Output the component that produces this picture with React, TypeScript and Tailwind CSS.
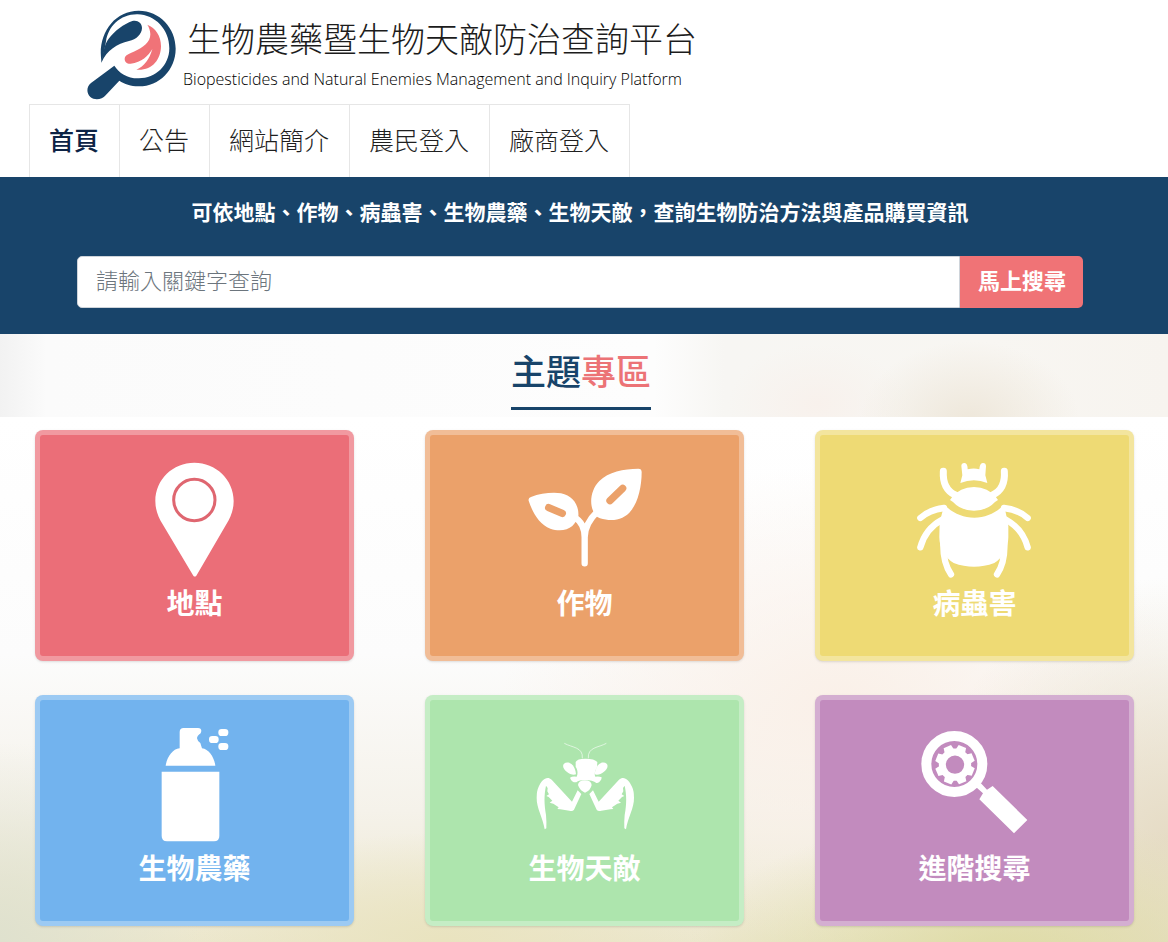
import { useState, type ReactNode } from "react";

type Topic = {
  label: string;
  href: string;
  color: string;
  icon: ReactNode;
};

const NAV_ITEMS = [
  { label: "首頁", href: "#home" },
  { label: "公告", href: "#news" },
  { label: "網站簡介", href: "#about" },
  { label: "農民登入", href: "#farmer-login" },
  { label: "廠商登入", href: "#vendor-login" },
];

const TOPICS: Topic[] = [
  { label: "地點", href: "#location", color: "bg-[#eb6e78]", icon: <PinIcon /> },
  { label: "作物", href: "#crop", color: "bg-[#eba16a]", icon: <SproutIcon /> },
  { label: "病蟲害", href: "#pest", color: "bg-[#eeda74]", icon: <BeetleIcon /> },
  { label: "生物農藥", href: "#biopesticide", color: "bg-[#72b3ee]", icon: <SprayIcon /> },
  { label: "生物天敵", href: "#enemy", color: "bg-[#ade5ad]", icon: <MantisIcon /> },
  { label: "進階搜尋", href: "#advanced", color: "bg-[#c28bbe]", icon: <GearSearchIcon /> },
];

export default function App() {
  return (
    <div
      lang="zh-TW"
      className="min-h-screen bg-white font-['Noto_Sans_CJK_TC','Noto_Sans',sans-serif]"
    >
      <Header />
      <main>
        <SearchBanner />
        <TopicHeading />
        <TopicGrid />
      </main>
    </div>
  );
}

function Header() {
  return (
    <header className="pt-[10px]">
      <a href="#home" className="inline-flex pl-[87px] align-top text-[#1c1c1c]">
        <Logo />
        <span className="block pt-1 pl-[6px]">
          <span className="block pl-1 text-[34px] leading-[48px] font-light">
            生物農藥暨生物天敵防治查詢平台
          </span>
          <span className="mt-[6px] block font-['Open_Sans','Noto_Sans',sans-serif] text-[16px] leading-[22px] font-light text-black">
            Biopesticides and Natural Enemies Management and Inquiry Platform
          </span>
        </span>
      </a>
      <nav className="mt-1 ml-[29px]">
        <ul className="inline-flex border-t border-r border-[#e6e6e6] align-top">
          {NAV_ITEMS.map((item, i) => (
            <li key={item.href} className="border-l border-[#e6e6e6]">
              <a
                href={item.href}
                className={`block pr-5 pb-1 pl-[19px] text-[25px] leading-[68px] ${
                  i === 0 ? "font-medium text-[#0d2345]" : "font-light text-[#1f1f1f]"
                }`}
              >
                {item.label}
              </a>
            </li>
          ))}
        </ul>
      </nav>
    </header>
  );
}

function SearchBanner() {
  const [keyword, setKeyword] = useState("");

  return (
    <section className="bg-[#18446a] pt-[18px] pr-[85px] pb-[26px] pl-[77px]">
      <p className="text-center text-[21px] leading-8 font-bold text-white">
        可依地點、作物、病蟲害、生物農藥、生物天敵，查詢生物防治方法與產品購買資訊
      </p>
      <form className="mt-[29px] flex h-13" onSubmit={(e) => e.preventDefault()}>
        <input
          type="text"
          aria-label="關鍵字"
          value={keyword}
          onChange={(e) => setKeyword(e.target.value)}
          placeholder="請輸入關鍵字查詢"
          className="min-w-0 flex-1 rounded-l-[5px] border border-[#ced4da] bg-white px-[18px] pb-[6px] text-[22px] font-light text-[#495057] outline-none placeholder:text-[#6c757d]"
        />
        <button
          type="submit"
          className="rounded-r-[5px] bg-[#f07376] pr-[17px] pb-[6px] pl-[18px] text-[22px] font-bold text-white"
        >
          馬上搜尋
        </button>
      </form>
    </section>
  );
}

function TopicHeading() {
  return (
    <section className="bg-[#fcfcfb] bg-[radial-gradient(ellipse_110px_80px_at_83%_105%,#eee7da,transparent),radial-gradient(ellipse_90px_60px_at_70%_85%,#f8f1ec,transparent),linear-gradient(90deg,#f2f2f2,#fbfbfb_4%,#fdfdfd_56%,#f7f6f3_62%,#f8f6f2_85%,#f7f4ef)] pt-[14px] pr-[6px] pb-[7px] text-center">
      <h2 className="inline-block border-b-[3px] border-[#18446a] pb-[15px] align-top text-[35px] leading-[44px] font-medium text-[#18446a]">
        主題<span className="text-[#ec7376]">專區</span>
      </h2>
    </section>
  );
}

function TopicGrid() {
  return (
    <section className="grid grid-cols-3 gap-x-[71px] gap-y-[34px] bg-[#fcfcfc] bg-[radial-gradient(ellipse_260px_110px_at_38%_100%,#e9e3bf,transparent),radial-gradient(ellipse_320px_150px_at_86%_104%,#dedba4,transparent),radial-gradient(ellipse_200px_200px_at_0%_100%,#dfe1ce,transparent),radial-gradient(ellipse_240px_260px_at_100%_80%,#e6dcc6,transparent),radial-gradient(ellipse_340px_240px_at_72%_55%,#faf0e8,transparent),linear-gradient(180deg,#ffffff,#fcfcfc_45%,#f5f2ea_75%,#ece7cd)] pt-[13px] pr-[34px] pb-4 pl-[35px]">
      {TOPICS.map((topic) => (
        <TopicCard key={topic.href} topic={topic} />
      ))}
    </section>
  );
}

function TopicCard({ topic }: { topic: Topic }) {
  return (
    <a
      href={topic.href}
      className={`flex flex-col items-center rounded-lg border-[5px] border-white/30 pt-6 pb-[37px] text-white shadow-sm ${topic.color}`}
    >
      {topic.icon}
      <span className="mt-[6px] text-[28px] leading-[34px] font-bold">{topic.label}</span>
    </a>
  );
}

function Logo() {
  return (
    <svg viewBox="50 30 270 270" className="size-[90px]" aria-hidden="true">
      <g fill="#18446a">
        {/* lens rim and handle */}
        <path d="M94 188C79 108 128 32 205 32C268 32 316 84 316 146C316 210 266 260 204 259C182 259 162 252 147 242L106 286C95 299 73 302 60 291C47 279 49 259 62 249L132 197C146 219 172 236 206 235C256 235 297 196 297 145C297 88 254 44 202 43C150 42 113 80 107 124C104 145 98 166 94 188Z" />
        {/* upper leaf */}
        <path d="M93 188C98 160 102 132 115 116C134 92 160 72 186 63C201 59 215 68 215 84C214 104 198 118 176 123C140 132 110 150 93 188Z" />
      </g>
      <path
        fill="#f07378"
        d="M231 74C256 84 272 108 272 138C272 180 244 213 198 209C222 199 238 177 246 147C234 168 214 187 181 191C171 192 163 187 163 177C163 165 176 161 190 155C220 143 240 126 240 103C240 92 236 82 231 74Z"
      />
    </svg>
  );
}

function PinIcon() {
  return (
    <svg viewBox="344 115 360 360" className="size-[120px]" fill="currentColor" aria-hidden="true">
      <path d="M522 126C458 126 405 176 405 241C405 268 414 290 427 311L519 465Q523 470 528 465L618 311C631 290 640 268 640 241C640 176 586 126 522 126Z" />
      <circle cx="522" cy="238" r="62" fill="none" stroke="#df6670" strokeWidth="9" />
    </svg>
  );
}

function SproutIcon() {
  return (
    <svg viewBox="344 115 360 360" className="size-[120px]" fill="currentColor" aria-hidden="true">
      <path d="M355 240Q353 232 362 229C390 218 427 214 452 218C488 225 507 255 504 287C500 294 496 308 486 316C470 330 444 332 420 324C386 312 365 272 355 240Z" />
      <path d="M684 144Q694 144 694 154C694 196 684 242 663 269C641 299 605 304 569 293Q552 287 549 272C537 248 541 207 567 181C594 154 640 144 684 144Z" />
      <path
        d="M490 288C513 301 523 325 523 350V428M562 272C533 300 523 325 523 350"
        fill="none"
        stroke="currentColor"
        strokeWidth="19"
        strokeLinecap="round"
      />
      <path
        d="M415 261L456 278M599 240L637 203"
        fill="none"
        stroke="#eba16a"
        strokeWidth="22"
        strokeLinecap="round"
      />
    </svg>
  );
}

function BeetleIcon() {
  return (
    <svg viewBox="344 120 360 360" className="size-[120px]" fill="currentColor" aria-hidden="true">
      <path d="M483 140Q484 131 493 132Q502 133 502 151Q521 146 537 151Q538 133 547 132Q557 131 557 142L555 169L561 192Q521 175 480 192L486 169Z" />
      <path d="M449 243L455 235Q478 205 521 204Q564 205 587 235L593 243L584 249Q560 275 521 275Q482 275 458 249Z" />
      <path d="M432 257C455 281 486 296 522 296C557 296 588 281 611 257L617 285L624 320V355C624 388 606 418 582 432Q521 455 460 432C436 418 417 388 417 355L418 310Z" />
      <path
        d="M429 157Q426 210 465 228M612 157Q616 210 577 228"
        fill="none"
        stroke="currentColor"
        strokeWidth="21"
        strokeLinecap="round"
      />
      <path
        d="M360 297Q385 273 431 267M425 302Q375 329 360 385M682 297Q657 273 611 267M617 302Q667 329 682 385M429 370Q427 430 452 466M612 370Q615 430 590 466"
        fill="none"
        stroke="currentColor"
        strokeWidth="19"
        strokeLinecap="round"
      />
    </svg>
  );
}

function SprayIcon() {
  return (
    <svg viewBox="344 117 360 360" className="size-[120px]" fill="currentColor" aria-hidden="true">
      <path d="M490 129H533Q543 129 543 138L541 145Q530 153 530 160Q531 168 540 174L545 190C566 192 582 218 585 242H436C440 217 456 192 478 190V141Q478 129 490 129Z" />
      <path d="M424 260H597V453Q597 469 581 469H440Q424 469 424 453Z" />
      <rect x="566" y="153" width="29" height="21" rx="10" />
      <rect x="594" y="132" width="30" height="21" rx="10" />
      <rect x="594" y="174" width="30" height="21" rx="10" />
    </svg>
  );
}

// left half of the mantis, mirrored for the right side
function MantisHalf() {
  return (
    <>
      <path
        d="M462 175C485 188 519 186 516 220"
        fill="none"
        stroke="currentColor"
        strokeWidth="3"
        strokeOpacity="0.6"
      />
      <path d="M461 236C472 227 494 235 497 268C480 275 449 249 461 236Z" />
      <path d="M385 305C394 285 409 271 424 284L485 350L502 316L513 327L491 374Q487 380 477 377L450 373L441 372L445 367L429 356L418 353L426 347L415 336L408 333L416 328L411 319L412 309L407 302C401 330 401 356 407 390Q409 412 408 430L403 433C398 399 378 368 379 338Q379 317 385 305Z" />
    </>
  );
}

function MantisIcon() {
  return (
    <svg viewBox="344 117 360 360" className="size-[120px]" fill="currentColor" aria-hidden="true">
      <MantisHalf />
      <g transform="matrix(-1 0 0 1 1050 0)">
        <MantisHalf />
      </g>
      <path d="M496 231Q500 221 525 221Q553 221 561 231L560 247C554 256 551 269 555 275Q566 273 574 277L573 283Q567 295 558 294C546 282 508 282 498 292Q484 293 479 278Q486 273 499 275C504 265 501 252 496 246Z" />
      <path d="M503 300Q504 286 524 286Q543 286 544 300Q541 316 524 323Q508 316 503 300Z" />
    </svg>
  );
}

const TOOTH_ANGLES = [22, 67, 112, 157, 202, 247, 292, 337];

function GearSearchIcon() {
  return (
    <svg viewBox="344 117 360 360" className="size-[120px]" fill="currentColor" aria-hidden="true">
      <circle cx="462" cy="237" r="84" fill="none" stroke="currentColor" strokeWidth="30" />
      <circle cx="464" cy="239" r="38" fill="none" stroke="currentColor" strokeWidth="21" />
      {TOOTH_ANGLES.map((angle) => (
        <path key={angle} d="M449 196L452 180H476L479 196Z" transform={`rotate(${angle} 464 239)`} />
      ))}
      <path d="M526 305L541 294L560 314L577 303L681 405L641 445L537 343L548 325Z" />
    </svg>
  );
}
